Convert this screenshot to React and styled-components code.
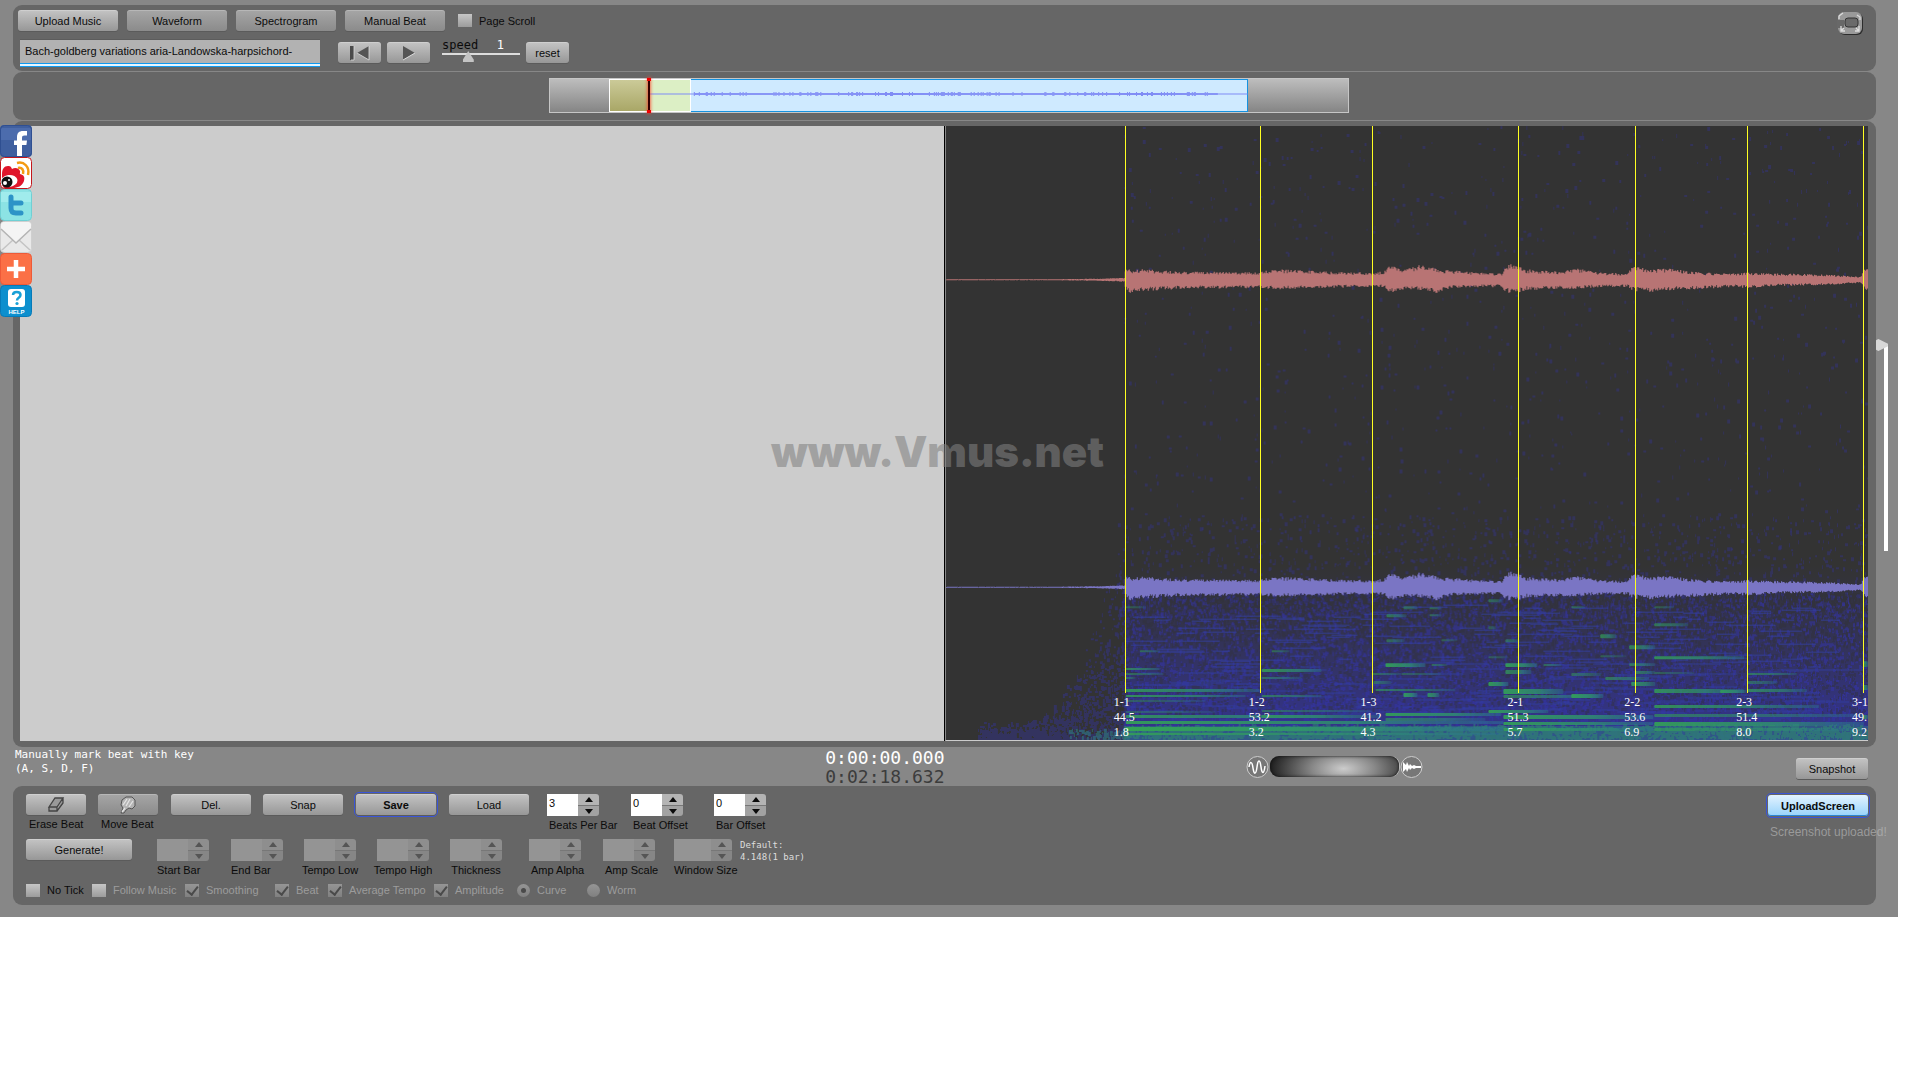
import React from 'react';
import styled, { createGlobalStyle, css } from 'styled-components';

const GlobalStyle = createGlobalStyle`
  * {
    box-sizing: border-box;
  }
  body {
    margin: 0;
    background: #fff;
    font-family: 'Liberation Sans', Arial, sans-serif;
    font-size: 11px;
    color: #0b0b0b;
  }
  button, input {
    font: inherit;
    color: inherit;
  }
`;

const mono = "'DejaVu Sans Mono', monospace";

const Page = styled.main`
  position: relative;
  width: calc(100% - 22px);
  padding: 5px 0 12px;
  background: #878787;
`;

const Panel = styled.section`
  margin: 0 22px 1px 13px;
  background: #666;
  border-radius: 9px;
`;

const TopPanel = styled(Panel)`
  height: 66px;
  padding: 5px 12px 0 5px;
  display: flex;
  justify-content: space-between;
  align-items: flex-start;
`;

const Row = styled.div`
  display: flex;
  align-items: ${props => props.align || 'center'};
  gap: ${props => props.gap || 0}px;
  height: ${props => props.height}px;
`;

const Button = styled.button`
  width: ${props => props.width}px;
  height: 21px;
  padding: 0;
  flex: none;
  display: flex;
  align-items: center;
  justify-content: center;
  border: 0;
  border-radius: 3px;
  background: ${props =>
    props.dim
      ? 'linear-gradient(#a6a6a6, #8b8b8b)'
      : 'linear-gradient(#c4c4c4, #979797)'};
  box-shadow: inset 0 1px 0 rgba(255, 255, 255, 0.2), 0 1px 0 #5b5b5b;
  ${props =>
    props.focused &&
    css`
      font-weight: bold;
      outline: 1px solid #3a55d8;
      outline-offset: 1px;
    `}
`;

const BlueButton = styled(Button)`
  background: linear-gradient(#e3f3ff, #98d3fb);
  box-shadow: inset 0 -1px 0 #2b87d4;
`;

const Title = styled.input`
  width: 300px;
  height: 28px;
  margin: 0 18px 0 2px;
  padding: 0 5px 4px;
  border: 0;
  border-top: 1px solid #5c5c5c;
  border-bottom: 1px solid #109af0;
  border-radius: 0;
  background: #b2b2b2;
  box-shadow: inset 0 -2px 0 #e8f6ff, inset 0 -3px 0 #109af0;
  outline: none;
`;

const Speed = styled.div`
  width: 78px;
  height: 27px;
  margin: 0 6px 0 12px;
`;

const SpeedText = styled.div`
  display: flex;
  justify-content: space-between;
  padding-right: 16px;
  font: 12px/12px ${mono};
  output {
    color: #fff;
  }
`;

const SpeedSlider = styled.input`
  appearance: none;
  display: block;
  width: 100%;
  height: 11px;
  margin: 0;
  background: linear-gradient(#ddd, #ddd) 0 2px / 100% 2px no-repeat;
  &::-webkit-slider-thumb {
    appearance: none;
    width: 11px;
    height: 11px;
    background: #c4c4c4;
    clip-path: polygon(50% 0, 100% 80%, 100% 100%, 0 100%, 0 80%);
  }
`;

const Tick = styled.label`
  display: flex;
  align-items: center;
  gap: 7px;
  width: ${props => (props.width ? `${props.width}px` : 'auto')};
  margin-left: ${props => props.indent || 0}px;
  white-space: nowrap;
  color: ${props => (props.off ? '#9c9c9c' : 'inherit')};
  input {
    appearance: none;
    position: relative;
    flex: none;
    width: 14px;
    height: 13px;
    margin: 0;
    background: linear-gradient(#c6c6c6, #9c9c9c);
  }
  input:disabled {
    background: linear-gradient(#959595, #808080);
  }
  input[type='radio'] {
    width: 13px;
    border-radius: 50%;
  }
  input[type='checkbox']:checked::after {
    content: '';
    position: absolute;
    left: 4px;
    top: 0;
    width: 5px;
    height: 9px;
    border: solid #4a4a4a;
    border-width: 0 2px 2px 0;
    transform: rotate(38deg);
  }
  input[type='radio']:checked::after {
    content: '';
    position: absolute;
    inset: 4px;
    border-radius: 50%;
    background: #4a4a4a;
  }
`;

const FullScreen = styled.button`
  width: 27px;
  height: 25px;
  margin-top: 1px;
  padding: 0;
  border: 0;
  background: none;
`;

const OverviewPanel = styled(Panel)`
  height: 48px;
  padding: 6px 0 0 9px;
`;

const Overview = styled.div`
  position: relative;
  display: flex;
  width: 43.2%;
  height: 35px;
  margin: 0 auto;
  border: 1px solid #c6c6c6;
  background: linear-gradient(#bdbdbd, #858585);
`;

const Span = styled.div`
  flex: ${props => props.size} 1 0;
  background: ${props => props.fill || 'none'};
  border: solid ${props => props.line || 'transparent'};
  border-width: ${props => props.edges || 0};
`;

const OverviewWave = styled.svg`
  position: absolute;
  left: 12.6%;
  top: 7px;
  width: 74.8%;
  height: 16px;
`;

const Playhead = styled.i`
  position: absolute;
  left: 12.3%;
  top: -1px;
  bottom: -1px;
  width: 2px;
  background: #300;
  box-shadow: 0 0 3px 1px rgba(255, 60, 40, 0.7);
  &::before,
  &::after {
    content: '';
    position: absolute;
    left: -1px;
    width: 4px;
    height: 3px;
    background: #e00;
  }
  &::before {
    top: 0;
  }
  &::after {
    bottom: 0;
  }
`;

const StageRow = styled.div`
  display: flex;
`;

const StagePanel = styled(Panel)`
  position: relative;
  flex: 1;
  margin-right: 0;
  margin-bottom: 0;
  display: grid;
  grid-template-columns: 925fr 923fr;
  height: 626px;
  padding: 5px 8px 6px 7px;
`;

const Blank = styled.div`
  background: #ccc;
  border-right: 1px solid #000;
`;

const Spectrum = styled.div`
  position: relative;
  overflow: hidden;
  background: #333;
  border-left: 1px solid #888;
  border-bottom: 1px solid #ccc;
  > svg {
    display: block;
    width: 100%;
    height: 100%;
  }
`;

const Beat = styled.div`
  position: absolute;
  top: 0;
  width: 60px;
  margin-left: -11px;
  font: 12px/15px 'Liberation Serif', serif;
  color: #fff;
  &::before {
    content: '';
    display: block;
    width: 1px;
    height: 567px;
    margin-left: 11px;
    margin-bottom: 2px;
    background: #ff2;
  }
  span {
    display: block;
  }
`;

const Watermark = styled.div`
  position: absolute;
  left: 0;
  right: 14px;
  top: 308px;
  text-align: center;
  font: 900 42px/46px Inter, 'DejaVu Sans', sans-serif;
  color: rgba(128, 128, 128, 0.58);
  pointer-events: none;
`;

const Side = styled.div`
  width: 22px;
  padding-top: 218px;
`;

const VolumeSlider = styled.input`
  appearance: none;
  writing-mode: vertical-lr;
  display: block;
  width: 12px;
  height: 212px;
  margin: 0;
  background: linear-gradient(#fff, #fff) 100% 5px / 4px 100% no-repeat;
  &::-webkit-slider-thumb {
    appearance: none;
    width: 12px;
    height: 12px;
    background: #d8d8d8;
    clip-path: polygon(0 10%, 20% 0, 100% 40%, 100% 60%, 20% 100%, 0 90%);
  }
`;

const Status = styled.div`
  display: grid;
  grid-template-columns: calc(50% + 3px) 1fr;
  height: 39px;
  padding: 0 30px 0 15px;
`;

const StatusHalf = styled.div`
  display: flex;
  justify-content: space-between;
  margin-left: ${props => props.indent || 0};
`;

const Hint = styled.p`
  width: 200px;
  margin: 1px 0 0;
  font: 11px/14px ${mono};
  color: #fff;
`;

const Clock = styled.div`
  margin-top: 1px;
  font: 18px/19px ${mono};
  color: #3c3c3c;
  div:first-child {
    color: #fff;
  }
`;

const Zoom = styled.div`
  display: flex;
  align-items: center;
  gap: 1px;
  height: 39px;
`;

const Wheel = styled.input`
  appearance: none;
  width: 129px;
  height: 21px;
  margin: 0;
  border-radius: 9px;
  background: radial-gradient(ellipse 58% 160% at 57% 60%, #ccc, #888 42%, #1c1c1c 100%);
  box-shadow: inset 0 0 3px #111, 1px 0 0 #bbb;
  &::-webkit-slider-thumb {
    appearance: none;
    width: 1px;
    height: 1px;
  }
`;

const SnapshotButton = styled(Button)`
  margin-top: 11px;
`;

const Controls = styled(Panel)`
  display: flex;
  justify-content: space-between;
  height: 119px;
  margin-bottom: 0;
  padding: 8px 7px 0 13px;
`;

const Tool = styled.div`
  width: ${props => props.width}px;
  flex: none;
`;

const ToolLabel = styled.label`
  display: flex;
  justify-content: ${props => (props.centered ? 'center' : 'flex-start')};
  width: ${props => (props.centered ? '52px' : 'auto')};
  padding-left: ${props => props.inset || 0}px;
  line-height: 19px;
  white-space: nowrap;
`;

const Stepper = styled.div`
  display: grid;
  grid-template-columns: ${props => (props.wide ? 37 : 31)}px 21px;
  grid-template-rows: 11px 11px;
  width: max-content;
  height: 22px;
  input {
    grid-row: span 2;
    width: 100%;
    height: 22px;
    padding: 0 2px 4px;
    border: 0;
    background: #fff;
  }
  input:disabled {
    background: #949494;
  }
`;

const StepButton = styled.button`
  display: flex;
  align-items: center;
  justify-content: center;
  padding: 0;
  border: 0;
  border-radius: ${props => (props.down ? '0 0 3px 0' : '0 3px 0 0')};
  border-top: ${props => (props.down ? '1px solid #777' : '0')};
  background: ${props => (props.down ? '#a2a2a2' : '#b4b4b4')};
  &:disabled {
    background: ${props => (props.down ? '#868686' : '#8e8e8e')};
    color: #555;
  }
`;

const Note = styled.p`
  margin: 0 0 0 5px;
  font: 9px/12px ${mono};
  color: #ddd;
`;

const Upload = styled.div`
  width: 102px;
  padding: 1px;
`;

const Message = styled.p`
  margin: 8px 0 0 2px;
  font-size: 12px;
  line-height: 16px;
  white-space: nowrap;
  color: rgba(190, 190, 190, 0.6);
`;

const Share = styled.nav`
  position: absolute;
  left: 0;
  top: 125px;
  display: flex;
  flex-direction: column;
  a,
  svg {
    display: block;
    width: 32px;
    height: 32px;
  }
`;

// small seeded generator so the drawing is the same on every render
const seeded = seed => {
  let s = seed;
  return () => {
    s = (s * 16807) % 2147483647;
    return s / 2147483647;
  };
};

// x, height above the axis, depth below it
const envelope = [
  [0, 0.5, 0.5], [100, 0.5, 0.5], [150, 1, 1], [178, 2, 2], [179, 10, 10],
  [186, 10, 14], [198, 10, 11], [234, 8, 9], [312, 7, 8], [315, 9, 9],
  [344, 10, 9], [374, 8, 8], [425, 7, 7], [438, 8, 7], [443, 15, 13],
  [458, 10, 10], [474, 15, 10], [494, 10, 13], [504, 9, 8], [556, 6, 7],
  [560, 15, 12], [569, 16, 14], [579, 10, 10], [614, 8, 9], [630, 11, 9],
  [654, 7, 7], [682, 6, 7], [687, 14, 11], [704, 10, 12], [726, 11, 10],
  [754, 7, 9], [784, 6, 7], [801, 7, 8], [834, 6, 6], [884, 5, 5],
  [915, 3, 3], [918, 9, 8], [923, 14, 11]
];

function wavePath(axis) {
  const rand = seeded(71);
  let d = '';
  let i = 0;
  for (let x = 0; x < 923; x += 1) {
    while (x > envelope[i + 1][0]) i += 1;
    const [x0, u0, d0] = envelope[i];
    const [x1, u1, d1] = envelope[i + 1];
    const t = (x - x0) / (x1 - x0);
    const up = (u0 + (u1 - u0) * t) * (0.65 + rand() * 0.4);
    const down = (d0 + (d1 - d0) * t) * (0.65 + rand() * 0.4);
    d += `M${x + 0.5} ${(axis - up).toFixed(1)}V${(axis + down).toFixed(1)}`;
  }
  return d;
}

function specks(seed, count, place) {
  const rand = seeded(seed);
  let d = '';
  for (let i = 0; i < count; i += 1) {
    const [x, y] = place(rand);
    const w = 1 + Math.floor(rand() * 3);
    const h = 2 + Math.floor(rand() * 3);
    d += `M${Math.floor(x)} ${Math.floor(y)}h${w}v${h}h-${w}z`;
  }
  return d;
}

const faint = specks(11, 1000, r => [178 + r() * 745, r() * 440]);
const rising = specks(23, 1800, r => [172 + r() * 751, 490 - Math.pow(r(), 2) * 100]);
const dense = specks(37, 7000, r => [178 + r() * 745, 468 + r() * 147]);
const shade = specks(41, 6500, r => [178 + r() * 745, 468 + Math.pow(r(), 1.5) * 120]);
const onset = specks(53, 1500, r => {
  const x = 182 - Math.pow(r(), 1.5) * 150;
  const reach = (12 + Math.pow(Math.max(0, (x - 50) / 130), 3) * 150) * (0.6 + r());
  return [x, 615 - Math.pow(r(), 1.6) * Math.min(reach, 170)];
});
const onsetFloor = specks(59, 90, r => [182 - Math.pow(r(), 2) * 60, 604 + r() * 9]);
const floorNoise = specks(67, 2600, r => [178 + r() * 745, 599 + Math.pow(r(), 0.7) * 14]);

const streaks = (() => {
  const rand = seeded(97);
  let d = '';
  for (let i = 0; i < 300; i += 1) {
    const x = Math.floor(178 + rand() * 700);
    const y = Math.floor(475 + Math.pow(rand(), 0.7) * 130);
    d += `M${x} ${y}h${Math.floor(12 + rand() * 40)}`;
  }
  return d;
})();

// partials of each note: x, y, length, thickness, strength
const partials = [
  [180, 481, 20, 2, 0.4], [180, 543, 34, 2, 0.7], [180, 548, 38, 2, 0.5],
  [180, 552, 10, 2, 0.5], [180, 564, 134, 3, 0.8], [180, 570, 120, 2, 0.8],
  [180, 575, 80, 2, 0.4], [180, 586, 90, 2, 0.4], [180, 590, 200, 3, 0.8],
  [180, 596, 378, 3, 0.9], [180, 602, 378, 4, 1], [180, 608, 378, 2, 0.8],
  [194, 525, 20, 2, 0.5], [316, 544, 60, 3, 0.8], [316, 552, 40, 2, 0.5],
  [326, 525, 18, 2, 0.5], [316, 570, 60, 2, 0.6], [316, 585, 110, 2, 0.5],
  [316, 590, 120, 3, 0.7], [426, 548, 30, 2, 0.5], [428, 556, 18, 3, 0.5],
  [441, 489, 20, 3, 0.6], [458, 481, 14, 3, 0.5], [484, 482, 12, 2, 0.5],
  [484, 489, 12, 2, 0.5], [441, 514, 18, 3, 0.5], [440, 538, 40, 4, 0.9],
  [496, 514, 16, 2, 0.4], [486, 539, 16, 2, 0.5], [458, 568, 14, 4, 0.9],
  [482, 568, 12, 4, 0.8], [430, 564, 80, 2, 0.6], [456, 548, 40, 2, 0.4],
  [440, 588, 116, 3, 0.9], [440, 593, 100, 3, 0.6], [543, 474, 14, 3, 0.5],
  [543, 501, 8, 3, 0.4], [543, 531, 20, 2, 0.4], [543, 557, 20, 4, 0.9],
  [543, 585, 60, 3, 0.9], [560, 514, 14, 3, 0.5], [560, 538, 32, 4, 0.9],
  [560, 545, 26, 4, 0.7], [598, 539, 18, 2, 0.5], [558, 564, 60, 5, 0.9],
  [558, 570, 95, 3, 0.6], [558, 590, 150, 4, 0.9], [558, 597, 150, 3, 0.9],
  [558, 603, 150, 3, 0.8], [626, 481, 14, 2, 0.5], [626, 548, 30, 3, 0.5],
  [626, 569, 32, 4, 0.9], [655, 509, 16, 4, 0.7], [655, 530, 26, 2, 0.4],
  [660, 552, 44, 3, 0.6], [684, 520, 26, 4, 0.7], [684, 538, 26, 3, 0.6],
  [686, 557, 24, 4, 0.8], [690, 546, 20, 3, 0.6], [709, 498, 34, 3, 0.6],
  [709, 481, 20, 2, 0.4], [709, 531, 90, 3, 0.8], [709, 547, 40, 2, 0.4],
  [709, 564, 90, 4, 0.8], [709, 580, 165, 3, 0.8], [709, 589, 210, 3, 0.6],
  [709, 597, 210, 4, 0.9], [709, 603, 210, 3, 0.6], [775, 565, 26, 3, 0.8],
  [802, 548, 50, 2, 0.6], [802, 556, 30, 3, 0.5], [802, 564, 60, 3, 0.7],
  [918, 536, 5, 6, 0.8], [918, 560, 5, 5, 0.8], [918, 590, 5, 4, 0.8]
];

const beats = [
  [179, '1-1', '44.5', '1.8'],
  [314, '1-2', '53.2', '3.2'],
  [426, '1-3', '41.2', '4.3'],
  [573, '2-1', '51.3', '5.7'],
  [690, '2-2', '53.6', '6.9'],
  [802, '2-3', '51.4', '8.0'],
  [918, '3-1', '49.', '9.2']
];

const overviewWave = (() => {
  const rand = seeded(5);
  let d = '';
  for (let x = 44; x < 570; x += 1) {
    const a = rand() < 0.2 ? 2 : 1;
    d += `M${x + 0.5} ${8 - a}V${8 + a}`;
  }
  return d;
})();

function SpectrumDrawing() {
  return (
    <svg viewBox="0 0 923 615" preserveAspectRatio="none" aria-hidden="true">
      <defs>
        <linearGradient id="haze" x1="0" y1="0" x2="0" y2="1">
          <stop offset="0" stopColor="#33338c" stopOpacity="0" />
          <stop offset="0.3" stopColor="#33338c" stopOpacity="0.25" />
          <stop offset="0.75" stopColor="#333399" stopOpacity="0.7" />
          <stop offset="1" stopColor="#333399" stopOpacity="0.9" />
        </linearGradient>
        <linearGradient id="partial">
          <stop offset="0" stopColor="#33a355" />
          <stop offset="0.6" stopColor="#2f9070" stopOpacity="0.9" />
          <stop offset="1" stopColor="#2c7490" stopOpacity="0.5" />
        </linearGradient>
      </defs>
      <path d={faint} fill="#333378" opacity="0.55" />
      <path d={rising} fill="#333380" opacity="0.5" />
      <rect x="179" y="440" width="744" height="175" fill="url(#haze)" />
      <path d={onset} fill="#33338c" opacity="0.5" />
      <path d={onsetFloor} fill="#2e7a80" opacity="0.6" />
      <path d={dense} fill="#3333a8" opacity="0.55" />
      <path d={shade} fill="#333338" opacity="0.42" />
      <path d={streaks} stroke="#3340a8" strokeWidth="1.500" opacity="0.5" />
      <rect x="179" y="601" width="744" height="14" fill="#2e7a80" opacity="0.5" />
      <path d={floorNoise} fill="#2f9668" opacity="0.45" />
      {partials.map(([x, y, w, h, o]) => (
        <rect
          key={`${x}-${y}`}
          x={x}
          y={y}
          width={w}
          height={h}
          rx="1"
          fill="url(#partial)"
          opacity={o}
        />
      ))}
      <path d={wavePath(154)} stroke="#b87474" strokeWidth="1.200" />
      <path d={wavePath(462)} stroke="#7a75c4" strokeWidth="1.200" />
    </svg>
  );
}

function Arrow({ down }) {
  return (
    <svg width="8" height="5" aria-hidden="true">
      <path d={down ? 'M0 0h8L4 5z' : 'M0 5h8L4 0z'} fill="currentColor" />
    </svg>
  );
}

function Field({ id, label, value, width, wide, centered, inset }) {
  const off = value === undefined;
  return (
    <Tool width={width}>
      <Stepper wide={wide}>
        <input id={id} type="text" defaultValue={value || ''} disabled={off} />
        <StepButton disabled={off} aria-label={`${label} up`}>
          <Arrow />
        </StepButton>
        <StepButton down disabled={off} aria-label={`${label} down`}>
          <Arrow down />
        </StepButton>
      </Stepper>
      <ToolLabel htmlFor={id} centered={centered} inset={inset}>
        {label}
      </ToolLabel>
    </Tool>
  );
}

function ShareBar() {
  return (
    <Share aria-label="Share">
      <a href="#facebook" aria-label="Facebook">
        <svg viewBox="0 0 32 32">
          <rect width="32" height="32" rx="4" fill="#3f5f9f" />
          <path d="M1 3h30v12H1z" fill="#4c6cad" />
          <rect x=".5" y=".5" width="31" height="31" rx="4" fill="none" stroke="#2f4f91" />
          <path d="M17 31V20h-3v-4.500h3V12c0-4 2-6 6-6h4v4.500h-2.500c-2 0-2.500.8-2.500 2.500v2.500h5l-.6 4.500H22v11z" fill="#fff" />
        </svg>
      </a>
      <a href="#weibo" aria-label="Weibo">
        <svg viewBox="0 0 32 32">
          <rect x=".5" y=".5" width="31" height="31" rx="4" fill="#fff" stroke="#c4161c" />
          <path d="M2 17c0-5 2-8 6-8 3 0 3 1 4 3 3-2 7-1 8 2 .5 1-.5 2 0 3 4 1 5 3 4 7-2 5-6 7-12 7H4l-2-3z" fill="#e0162b" />
          <ellipse cx="9" cy="24" rx="8.500" ry="6" fill="#fff" transform="rotate(-8 9 24)" />
          <circle cx="7" cy="25" r="5.500" fill="#111" />
          <circle cx="5" cy="26" r="2" fill="#fff" />
          <circle cx="9" cy="23" r="1" fill="#fff" />
          <path d="M17 6c7-2 13 4 11 12M18 11c4-1 6 2 5 6" fill="none" stroke="#f39b13" strokeWidth="2.500" />
        </svg>
      </a>
      <a href="#twitter" aria-label="Twitter">
        <svg viewBox="0 0 32 32">
          <rect x=".5" y=".5" width="31" height="31" rx="4" fill="#8ce3e4" stroke="#6fd0d4" />
          <path d="M1 3h30v10H1z" fill="#a0ecec" />
          <path d="M11 8v11c0 4 2 5 5 5h5M11 14h10" fill="none" stroke="#2d93c7" strokeWidth="5" strokeLinejoin="round" strokeLinecap="round" />
        </svg>
      </a>
      <a href="#mail" aria-label="Mail">
        <svg viewBox="0 0 32 32">
          <rect x=".5" y=".5" width="31" height="31" rx="4" fill="#e9e9e9" stroke="#cfcfcf" />
          <path d="M2 29l11-10M30 29L19 19" stroke="#c4c4c4" strokeWidth="1.500" />
          <path d="M1 8l15 14L31 8V4q0-3-3-3H4Q1 1 1 4z" fill="#f4f4f4" />
          <path d="M1 8l15 14L31 8" fill="none" stroke="#b4b4b4" strokeWidth="1.500" />
        </svg>
      </a>
      <a href="#more" aria-label="More">
        <svg viewBox="0 0 32 32">
          <rect x=".5" y=".5" width="31" height="31" rx="4" fill="#fb7046" stroke="#ee5a38" />
          <path d="M16 7v18M7 16h18" stroke="#fff" strokeWidth="4.500" />
        </svg>
      </a>
      <a href="#help" aria-label="Help">
        <svg viewBox="0 0 32 32">
          <rect x=".5" y=".5" width="31" height="31" rx="4" fill="#0c8fce" stroke="#067ab8" />
          <rect x="8" y="4" width="17" height="18" rx="3" fill="#fff" />
          <path d="M13 10c0-4 7.500-4 7.500 0 0 3-3.500 2.500-3.500 5.500" fill="none" stroke="#18a0d6" strokeWidth="2.500" />
          <circle cx="17" cy="18.500" r="1.600" fill="#18a0d6" />
          <text x="16.500" y="29" textAnchor="middle" fontSize="6" fontWeight="bold" fill="#fff">
            HELP
          </text>
        </svg>
      </a>
    </Share>
  );
}

function App() {
  return (
    <>
      <GlobalStyle />
      <Page>
        <TopPanel>
          <div>
            <Row gap={9} height={21}>
              <Button width={100}>Upload Music</Button>
              <Button width={100} dim>Waveform</Button>
              <Button width={100} dim>Spectrogram</Button>
              <Button width={100} dim>Manual Beat</Button>
              <Tick indent={4}>
                <input type="checkbox" />
                Page Scroll
              </Tick>
            </Row>
            <Row height={43}>
              <Title
                aria-label="Title"
                defaultValue="Bach-goldberg variations aria-Landowska-harpsichord-"
              />
              <Row gap={6} height={21}>
                <Button width={43} aria-label="Back to start">
                  <svg width="22" height="16">
                    <path d="M1 1h4v14H1z" fill="#4a4a4a" />
                    <path d="M5 1v14H2" fill="none" stroke="#ddd" strokeWidth=".8" />
                    <path d="M20 1v14L8 8z" fill="#555" />
                    <path d="M20 1v14L8 8" fill="none" stroke="#ddd" strokeWidth=".8" />
                  </svg>
                </Button>
                <Button width={43} aria-label="Play">
                  <svg width="14" height="16">
                    <path d="M1 1v14l12-7z" fill="#555" />
                    <path d="M1 15l12-7" stroke="#ddd" />
                  </svg>
                </Button>
              </Row>
              <Speed>
                <SpeedText>
                  <label htmlFor="speed">speed</label>
                  <output htmlFor="speed">1</output>
                </SpeedText>
                <SpeedSlider id="speed" type="range" defaultValue="31" />
              </Speed>
              <Button width={43}>reset</Button>
            </Row>
          </div>
          <FullScreen aria-label="Full screen">
            <svg width="27" height="25">
              <rect x="2" y="2" width="24" height="22" rx="6" fill="#2c2c2c" />
              <rect x="1" y="1" width="24" height="22" rx="6" fill="#9a9a9a" />
              <path d="M0 9h7v8H0z" fill="#686868" />
              <rect x="8" y="7" width="13" height="9" rx="3" fill="#6a6a6a" stroke="#333" />
              <path d="M2 8V5l4-3M20 4l3 2v3M4 15v5h4M4 20l3-3M22 15v5h-4M22 20l-3-3" fill="none" stroke="#ddd" strokeWidth="1.300" />
            </svg>
          </FullScreen>
        </TopPanel>

        <OverviewPanel>
          <Overview>
            <Span size={60} />
            <Span size={40} fill="linear-gradient(#cbca98, #a9a767)" line="#fff" edges="1px 0 1px 1px" />
            <Span size={40} fill="#dcefc5" line="#fff" edges="1px 1px 1px 0" />
            <Span size={559} fill="#cfeaff" line="#1592e0" edges="1px 1px 1px 0" />
            <Span size={101} />
            <OverviewWave viewBox="0 0 600 16" preserveAspectRatio="none">
              <path d="M0 8h600" stroke="#7f8cf5" />
              <path d={overviewWave} stroke="#7f8cf5" />
            </OverviewWave>
            <Playhead />
          </Overview>
        </OverviewPanel>

        <StageRow>
          <StagePanel>
            <Blank />
            <Spectrum>
              <SpectrumDrawing />
              {beats.map(([x, name, tempo, time]) => (
                <Beat key={name} style={{ left: `${(x / 923) * 100}%` }}>
                  <span>{name}</span>
                  <span>{tempo}</span>
                  <span>{time}</span>
                </Beat>
              ))}
            </Spectrum>
            <Watermark>www.Vmus.net</Watermark>
          </StagePanel>
          <Side>
            <VolumeSlider type="range" defaultValue="0" aria-label="Height" />
          </Side>
        </StageRow>

        <Status>
          <StatusHalf>
            <Hint>Manually mark beat with key (A, S, D, F)</Hint>
            <Clock>
              <div>0:00:00.000</div>
              <div>0:02:18.632</div>
            </Clock>
          </StatusHalf>
          <StatusHalf indent="32.7%">
            <Zoom>
              <svg width="23" height="24">
                <circle cx="11.500" cy="12" r="10.500" fill="#777" stroke="#ccc" />
                <path d="M3 12c1-6 3-6 4 1s3 7 4-1 3-8 4 0 3 7 4-1" fill="none" stroke="#fff" strokeWidth="1.500" />
              </svg>
              <Wheel type="range" aria-label="Time zoom" />
              <svg width="23" height="24">
                <circle cx="11.500" cy="12" r="10.500" fill="#777" stroke="#ccc" />
                <path d="M3 7l3 3 1-3 2 4 1-2 2 2 2-1 2 1h5v2h-5l-2 1-2-1-2 2-1-2-2 4-1-3-3 3z" fill="#fff" />
              </svg>
            </Zoom>
            <SnapshotButton width={72}>Snapshot</SnapshotButton>
          </StatusHalf>
        </Status>

        <Controls>
          <div>
            <Row align="flex-start" height={45}>
              <Tool width={72}>
                <Button id="erase" width={60}>
                  <svg width="18" height="16">
                    <path d="M2 10L8 1h8l-6 9zM2 10v4h8v-4M10 14l6-8V1" fill="#999" stroke="#444" strokeWidth="1.300" />
                  </svg>
                </Button>
                <ToolLabel htmlFor="erase" inset={3}>Erase Beat</ToolLabel>
              </Tool>
              <Tool width={73}>
                <Button id="move" width={60} dim>
                  <svg width="18" height="18">
                    <path d="M2 17l2-5-2-3 1-5 4-3h6l3 3v6l-3 3-3-1-3 2-2 3z" fill="#b4b4b4" stroke="#555" />
                    <path d="M4 9l4-6M7 10l4-7M10 11l4-6M3 16l3-4" stroke="#e4e4e4" strokeWidth="1.300" />
                  </svg>
                </Button>
                <ToolLabel htmlFor="move" inset={3}>Move Beat</ToolLabel>
              </Tool>
              <Tool width={92}><Button width={80}>Del.</Button></Tool>
              <Tool width={93}><Button width={80}>Snap</Button></Tool>
              <Tool width={93}><Button width={80} focused>Save</Button></Tool>
              <Tool width={98}><Button width={80}>Load</Button></Tool>
              <Field id="per-bar" label="Beats Per Bar" value="3" width={84} inset={2} />
              <Field id="beat-offset" label="Beat Offset" value="0" width={83} inset={2} />
              <Field id="bar-offset" label="Bar Offset" value="0" width={83} inset={2} />
            </Row>
            <Row align="flex-start" height={44}>
              <Tool width={131}><Button width={106}>Generate!</Button></Tool>
              <Field id="start-bar" label="Start Bar" width={74} />
              <Field id="end-bar" label="End Bar" width={73} />
              <Field id="tempo-low" label="Tempo Low" width={73} centered />
              <Field id="tempo-high" label="Tempo High" width={73} centered />
              <Field id="thickness" label="Thickness" width={79} centered />
              <Field id="amp-alpha" label="Amp Alpha" width={74} inset={2} />
              <Field id="amp-scale" label="Amp Scale" width={71} inset={2} />
              <Field id="window-size" label="Window Size" width={61} wide />
              <Note>
                Default:
                <br />
                4.148(1 bar)
              </Note>
            </Row>
            <Row height={14}>
              <Tick width={66}>
                <input type="checkbox" />
                No Tick
              </Tick>
              <Tick width={93} off>
                <input type="checkbox" />
                Follow Music
              </Tick>
              <Tick width={90} off>
                <input type="checkbox" defaultChecked disabled />
                Smoothing
              </Tick>
              <Tick width={53} off>
                <input type="checkbox" defaultChecked disabled />
                Beat
              </Tick>
              <Tick width={106} off>
                <input type="checkbox" defaultChecked disabled />
                Average Tempo
              </Tick>
              <Tick width={83} off>
                <input type="checkbox" defaultChecked disabled />
                Amplitude
              </Tick>
              <Tick width={70} off>
                <input type="radio" name="view" defaultChecked disabled />
                Curve
              </Tick>
              <Tick off>
                <input type="radio" name="view" disabled />
                Worm
              </Tick>
            </Row>
          </div>
          <Upload>
            <BlueButton width={100} focused>UploadScreen</BlueButton>
            <Message>Screenshot uploaded!</Message>
          </Upload>
        </Controls>
        <ShareBar />
      </Page>
    </>
  );
}

export default App;
